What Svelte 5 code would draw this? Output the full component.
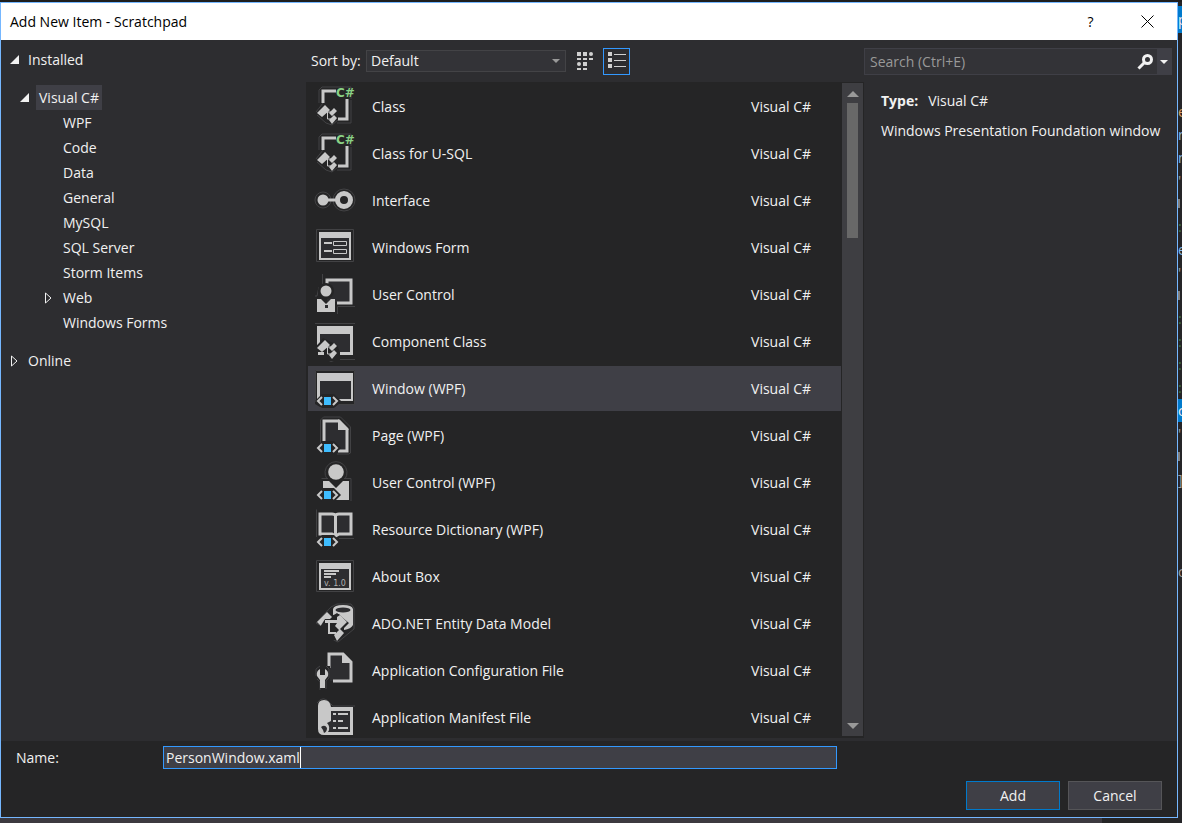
<script>
    const languages = ["WPF", "Code", "Data", "General", "MySQL", "SQL Server", "Storm Items", "Web", "Windows Forms"];

    const templates = [
        { name: "Class", icon: "class" },
        { name: "Class for U-SQL", icon: "class" },
        { name: "Interface", icon: "interface" },
        { name: "Windows Form", icon: "form" },
        { name: "User Control", icon: "control" },
        { name: "Component Class", icon: "component" },
        { name: "Window (WPF)", icon: "window" },
        { name: "Page (WPF)", icon: "page" },
        { name: "User Control (WPF)", icon: "user" },
        { name: "Resource Dictionary (WPF)", icon: "book" },
        { name: "About Box", icon: "about" },
        { name: "ADO.NET Entity Data Model", icon: "entity" },
        { name: "Application Configuration File", icon: "config" },
        { name: "Application Manifest File", icon: "manifest" }
    ];

    // slice of the editor that shows to the right of the dialog
    const editor_lines = [
        { text: "e", kind: "ident" },
        { text: "r", kind: "type" },
        { text: "n", kind: "type" },
        { text: "'" },
        { kind: "block" },
        { text: ":", kind: "comment" },
        { text: "e", kind: "type" },
        { text: "'" },
        { kind: "block" },
        { text: ":", kind: "comment" },
        { text: ":", kind: "comment" },
        { text: ":", kind: "comment" },
        { text: ":", kind: "comment" },
        { text: "c", kind: "active" },
        { text: "'" },
        { kind: "block" },
        { text: "]" },
        {},
        {},
        {},
        { text: "c" }
    ];

    let selected = $state(6);
    let file_name = $state("PersonWindow.xaml");
    let search = $state("");
    let sort = $state("Default");
</script>

{#snippet tag()}
    <path class="back" d="M0 33l7-7h12l7 7-7 7H7z" />
    <path class="line" d="M7 29l-4 4 4 4M18 29l4 4-4 4" />
    <path class="blue" d="M9 29h7v8H9z" />
{/snippet}

{#snippet nodes()}
    <path class="fill" d="M2 27l8-8 5 5-8 7zM14 27l5-5 3 3-5 5zM14 34l5-5 3 3-5 6z" />
    <path class="thin" d="M10 26h8M12.500 26v7h4" />
{/snippet}

{#snippet icon(kind)}
    <svg class="icon" viewBox="0 1 40 40" aria-hidden="true">
        {#if kind === "class"}
            <path class="halo" d="M4 17V4l3-3h29v12M1 26l7-9M22 37h14V14M2 29l9 8 6 2 6-5" />
            <path class="thick" d="M8 17V5h13M23 33h9V13" />
            {@render nodes()}
            <text class="cs" x="21" y="11">C#</text>
        {:else if kind === "interface"}
            <circle class="halo" cx="8" cy="20" r="8" />
            <circle class="halo" cx="29" cy="20" r="11" />
            <circle class="fill" cx="8" cy="20" r="5.500" />
            <path class="thick" d="M12 20h11" />
            <circle class="ring" cx="29" cy="20" r="6.500" />
        {:else if kind === "form"}
            <path class="halo" d="M1.500 2.500h37v32h-37z" />
            <path class="fill" d="M4 5h32v28H4z" />
            <path class="inner" d="M6 11h28v20H6z" />
            <path class="line" d="M9 16h8M9 24h8" />
            <path class="thin" d="M18.500 14.500h13v4h-13zM18.500 22.500h13v4h-13z" />
        {:else if kind === "control"}
            <path class="halo" d="M7.500 0v13M4 13l-2 9H0M22.500 40v-7.500H40" />
            <path class="inner" d="M12 5h24v23H12z" />
            <path class="thick" d="M12 11V6h24v23H22" />
            <circle class="back" cx="11" cy="17" r="8" />
            <circle class="fill" cx="11" cy="17" r="5.500" />
            <path class="fill" d="M2 25h4l5 5 5-5h4v13H2z" />
            <path class="inner" d="M10 31h3v3h-3z" />
        {:else if kind === "component"}
            <path class="halo" d="M0 2.500h40M0 38.500h12l4 2 6-2h18" />
            <path class="fill" d="M2 5h36v29H2z" />
            <path class="inner" d="M5 13h30v18H5z" />
            <path class="back" d="M0 26l8-9 14 7 3 7v9H0z" />
            {@render nodes()}
            <path class="fill" d="M2 5h3v16l-3 3zM3 31h6v3H3z" />
        {:else if kind === "window"}
            <path class="back" d="M0 2h40v34H24l-4 3H5l-5-3z" />
            <path class="halo" d="M.5 34V2.500h39v34H24" />
            <path class="fill" d="M2 5h36v28H2z" />
            <path class="inner" d="M5 13h31v18H5z" />
            {@render tag()}
        {:else if kind === "page"}
            <path class="halo" d="M5.500 28V5l3-3h17l10 10v26l-2 1H22" />
            <path class="inner" d="M8 5h16l9 9v22H8z" />
            <path class="thick" d="M9 29V6h15l8 8v22h-9" />
            <path class="fill" d="M23 4l11 11H23z" />
            {@render tag()}
        {:else if kind === "user"}
            <path class="halo" d="M12 17a11 11 0 1 1 18 0M6.500 16.500H13M29 16.500h7V39" />
            <circle class="fill" cx="21" cy="10" r="7.800" />
            <path class="fill" d="M8 19h6l7 7 7-7h6v19H8z" />
            {@render tag()}
        {:else if kind === "book"}
            <path class="halo" d="M1.500 28V.5M24 29.500h15" />
            <path class="inner" d="M5 5h31v22H5z" />
            <path class="thick" d="M5 5h12q3 0 3.500 2Q21 5 24 5h12v20H24l-3.500 2-3.500-2H5zM20.500 7v20" />
            {@render tag()}
        {:else if kind === "about"}
            <path class="halo" d="M1.500 4.500h37v31h-37z" />
            <path class="fill" d="M4 7h32v27H4z" />
            <path class="inner" d="M6 13h28v19H6z" />
            <path class="line" d="M9 15h15M9 18h12M9 21h7" />
            <text class="ver" x="9" y="30">v. 1.0</text>
        {:else if kind === "entity"}
            <path class="halo" d="M1 20L16 4l6-3h14l3 4v21L23 39l-9-4-2-9z" />
            <path class="fill" d="M18 6q1-4 10-4t10 4v16q-2 4-9 5V17l-5-6-6 1z" />
            <ellipse class="inner" cx="28" cy="7" rx="7.500" ry="2.500" />
            <path class="fill" d="M2 19L12 9l5 5L7 24z" />
            <path class="back" d="M10 16h10l-1-4 3-2 12 10-9 9v3l-7 6-9-4v-8l-4-2z" />
            <path class="fill" d="M10 17h12v-3l3-2 7 7-8 8-4-4 2-3H10zM19 32l6-6 4 4-7 8z" />
            <path class="line" d="M14 19v11h7" />
        {:else if kind === "config"}
            <path class="inner" d="M14 4h14l8 8v19H14z" />
            <path class="thick" d="M14 18V4h14l8 8v19H18" />
            <path class="fill" d="M27 4l10 9H27z" />
            <path class="back" d="M0 16h15v24H0z" />
            <path class="halo" d="M1 26v-7l4-3M11 16l3 3v9l-3 3v8M2 29l3 3v8" />
            <path class="fill" d="M5 19v6h5v-6q4 2 3 7l-3 4v8H5v-8l-3-4q-1-5 3-7z" />
        {:else}
            <path class="halo" d="M2 6q6-9 14 1l2 2h22" />
            <path class="fill" d="M3 9q0-6 6-6t7 7h22v28H9q-6 0-6-6z" />
            <path class="inner" d="M16 14h19v21H13q3-5-1-9l4-2z" />
            <path class="inner" d="M6 30q4-3 6 1 0 4-3 5l-1-3z" />
            <path class="line" d="M18 17h3M23 17h10M18 24h3M23 24h5M18 31h3M23 31h10" />
        {/if}
    </svg>
{/snippet}

{#snippet closed_arrow()}
    <svg class="arrow" viewBox="0 0 10 12" aria-hidden="true"><path class="closed" d="M1.500 1v10l5.500-5z" /></svg>
{/snippet}

{#snippet open_arrow()}
    <svg class="arrow" viewBox="0 0 10 12" aria-hidden="true"><path class="open" d="M9 1v9H0z" /></svg>
{/snippet}

<div class="desktop">
    <main class="dialog">
        <header class="titlebar">
            <h1>Add New Item - Scratchpad</h1>
            <button class="caption" aria-label="Help">?</button>
            <button class="caption" aria-label="Close">
                <svg class="close" viewBox="0 0 13 13"><path d="M.5 .5l12 12M12.500 .5l-12 12" /></svg>
            </button>
        </header>

        <div class="content">
            <nav class="tree">
                <button class="node">{@render open_arrow()}<span>Installed</span></button>
                <div class="group">
                    <button class="node lang">{@render open_arrow()}<span class="current">Visual C#</span></button>
                    {#each languages as language}
                        <button class="node child">
                            {#if language === "Web"}{@render closed_arrow()}{/if}
                            <span>{language}</span>
                        </button>
                    {/each}
                </div>
                <button class="node">{@render closed_arrow()}<span>Online</span></button>
            </nav>

            <section class="middle">
                <div class="toolbar">
                    <label for="sort">Sort by:</label>
                    <div class="select">
                        <select id="sort" bind:value={sort}>
                            <option>Default</option>
                            <option>Name Ascending</option>
                            <option>Name Descending</option>
                        </select>
                        <svg class="drop" viewBox="0 0 8 4" aria-hidden="true"><path d="M0 0h8L4 4z" /></svg>
                    </div>
                    <button class="view" aria-label="Small icons">
                        <svg viewBox="0 0 18 18">
                            <path d="M1 0h4v4H1zM7 0h4v4H7zM7 10h4v4H7zM1 6h4v2H1zM7 6h4v2H7zM13 6h4v2h-4zM1 16h4v2H1zM7 16h4v2H7z" />
                            <circle cx="15" cy="2" r="2" /><circle cx="3" cy="12" r="2" />
                        </svg>
                    </button>
                    <button class="view pressed" aria-label="Medium icons">
                        <svg viewBox="0 0 18 18"><path d="M0 0h4v4H0zM0 6h4v4H0zM0 12h4v4H0zM6 2h12v1H6zM6 8h12v1H6zM6 14h12v1H6z" /></svg>
                    </button>
                </div>

                <div class="list">
                    <div class="items">
                        {#each templates as template, i}
                            <button class="item" class:selected={selected === i} onclick={() => selected = i}>
                                {@render icon(template.icon)}
                                <span class="name">{template.name}</span>
                                <span>Visual C#</span>
                            </button>
                        {/each}
                    </div>
                    <div class="scrollbar">
                        <svg class="scroll-arrow" viewBox="0 0 12 6" aria-hidden="true"><path d="M0 6h12L6 0z" /></svg>
                        <div class="track"><div class="thumb"></div></div>
                        <svg class="scroll-arrow" viewBox="0 0 12 6" aria-hidden="true"><path d="M0 0h12L6 6z" /></svg>
                    </div>
                </div>
            </section>

            <aside class="details">
                <div class="search">
                    <input type="text" aria-label="Search" placeholder="Search (Ctrl+E)" bind:value={search} />
                    <button class="find" aria-label="Search">
                        <svg viewBox="0 0 16 16"><circle cx="10.500" cy="5.500" r="4" /><path d="M7.500 8.500L1.500 14.500" /></svg>
                    </button>
                    <button class="more" aria-label="Search options">
                        <svg viewBox="0 0 8 4"><path d="M0 0h8L4 4z" /></svg>
                    </button>
                </div>
                <p><b>Type:</b><span>Visual C#</span></p>
                <p>Windows Presentation Foundation window</p>
            </aside>
        </div>

        <footer>
            <div class="name-row">
                <label for="file-name">Name:</label>
                <div class="name-box">
                    <input id="file-name" type="text" bind:value={file_name} />
                    <span class="caret"></span>
                </div>
            </div>
            <div class="buttons">
                <button class="primary">Add</button>
                <button>Cancel</button>
            </div>
        </footer>
    </main>

    <div class="editor" aria-hidden="true">
        <div class="tab">p</div>
        <ul>
            {#each editor_lines as line}
                <li class={line.kind}>{line.text}</li>
            {/each}
        </ul>
    </div>
</div>

<style>
    :global(body) {
        background-color: #3c393f;
    }

    .desktop {
        display: grid;
        grid-template-columns: minmax(0, 1fr) 4px;
        min-height: 100vh;
        padding-top: 2px;
        box-sizing: border-box;
        align-items: start;
        background: linear-gradient(#1e1e1e 2px, transparent 2px), linear-gradient(to left, #252526 80px, transparent 80px);
        font-family: "Segoe UI", "Open Sans", "Noto Sans", sans-serif;
        font-size: 14px;
        line-height: 20px;
        color: #f1f1f1;
    }

    button, input, select {
        font: inherit;
        color: inherit;
        background: none;
        border: none;
        margin: 0;
        padding: 0;
        outline: none;
        box-sizing: border-box;
    }

    svg {
        display: block;
        flex: none;
    }

    .dialog {
        border: 1px solid #75b7ff;
        background-color: #2d2d30;
    }

    .titlebar {
        display: flex;
        align-items: center;
        height: 37px;
        padding: 0 1px 0 9px;
        background-color: #fff;
        color: #000;
    }
    h1 {
        flex: 1;
        margin: 0;
        font-size: 14px;
        font-weight: normal;
    }
    .caption {
        display: flex;
        align-items: center;
        justify-content: center;
        width: 57px;
        height: 36px;
    }
    .close {
        width: 13px;
        height: 13px;
        fill: none;
        stroke: #000;
    }

    .content {
        display: grid;
        grid-template-columns: 305px minmax(0, 1fr) 313px;
    }

    .tree {
        display: flex;
        flex-direction: column;
        gap: 13px;
        padding: 7px 0 0 9px;
    }
    .group {
        display: flex;
        flex-direction: column;
    }
    .node {
        display: flex;
        align-items: center;
        gap: 8px;
        height: 25px;
        text-align: left;
    }
    .lang {
        gap: 6px;
        padding-left: 10px;
    }
    .child {
        padding-left: 53px;
    }
    .child:has(.arrow) {
        padding-left: 34px;
        gap: 9px;
    }
    .current {
        height: 25px;
        line-height: 25px;
        padding: 0 3px;
        background-color: #3f3f46;
    }
    .arrow {
        width: 10px;
        height: 12px;
    }
    .arrow .open {
        fill: #f1f1f1;
    }
    .arrow .closed {
        fill: none;
        stroke: #f1f1f1;
    }

    .toolbar {
        display: flex;
        align-items: center;
        height: 42px;
        padding-left: 5px;
    }
    .toolbar label {
        width: 55px;
        white-space: nowrap;
    }
    .select {
        display: flex;
        align-items: center;
        width: 200px;
        height: 22px;
        box-sizing: border-box;
        border: 1px solid #434346;
        background-color: #333337;
        padding-right: 5px;
    }
    select {
        appearance: none;
        flex: 1;
        padding-left: 4px;
        height: 20px;
    }
    .drop {
        width: 8px;
        height: 4px;
        fill: #999;
    }
    .view {
        display: flex;
        align-items: center;
        justify-content: center;
        width: 27px;
        height: 27px;
        margin-left: 5px;
        border: 1px solid transparent;
        fill: #d0d0d0;
    }
    .view svg {
        width: 18px;
        height: 18px;
    }
    .pressed {
        border-color: #3399ff;
    }

    .list {
        display: flex;
        height: 656px;
        box-sizing: border-box;
        padding: 1px 1px 2px 2px;
        background-color: #252526;
    }
    .items {
        flex: 1;
        display: flex;
        flex-direction: column;
        gap: 2px;
        padding-top: 1px;
        min-width: 0;
        overflow: hidden;
    }
    .item {
        display: flex;
        flex: none;
        align-items: center;
        height: 45px;
        padding: 0 30px 0 7px;
        text-align: left;
    }
    .item.selected {
        background-color: #3f3f46;
    }
    .name {
        flex: 1;
        padding-left: 17px;
    }
    .icon {
        width: 40px;
        height: 40px;
        overflow: visible;
    }
    .icon .fill {
        fill: #c8c8c8;
    }
    .icon .inner {
        fill: #2d2d30;
    }
    .icon .back {
        fill: #252526;
    }
    .icon .blue {
        fill: #3fbdff;
    }
    .icon .thick, .icon .line, .icon .thin, .icon .ring, .icon .halo {
        fill: none;
        stroke: #c8c8c8;
    }
    .icon .thick {
        stroke-width: 3;
    }
    .icon .line {
        stroke-width: 2;
    }
    .icon .ring {
        stroke-width: 5;
    }
    .icon .halo {
        stroke: #424244;
    }
    .cs {
        fill: #89d185;
        font: bold 12px "DejaVu Sans", sans-serif;
    }
    .ver {
        fill: #b0b0b0;
        font: 8px "DejaVu Sans", sans-serif;
    }

    .scrollbar {
        display: flex;
        flex-direction: column;
        align-items: center;
        gap: 6px;
        width: 21px;
        padding: 8px 0 7px;
        margin-left: 1px;
        box-sizing: border-box;
        background-color: #3e3e42;
    }
    .scroll-arrow {
        width: 12px;
        height: 6px;
        fill: #999;
    }
    .track {
        flex: 1;
        width: 11px;
    }
    .thumb {
        height: 135px;
        background-color: #686868;
    }

    .details {
        padding: 8px 5px 0 0;
    }
    .search {
        display: flex;
        height: 27px;
        box-sizing: border-box;
        border: 1px solid #3f3f46;
        background-color: #333337;
        margin-bottom: 16px;
    }
    .search input {
        flex: 1;
        min-width: 0;
        padding-left: 5px;
    }
    .search input::placeholder {
        color: #999;
        opacity: 1;
    }
    .find {
        padding: 0 4px;
    }
    .find svg {
        width: 16px;
        height: 16px;
        fill: none;
        stroke: #f1f1f1;
        stroke-width: 3;
    }
    .more {
        display: flex;
        align-items: center;
        justify-content: center;
        width: 14px;
        background-color: #3f3f46;
    }
    .more svg {
        width: 8px;
        height: 4px;
        fill: #f1f1f1;
    }
    .details p {
        margin: 0 0 10px 17px;
        white-space: nowrap;
    }
    .details b {
        margin-right: 10px;
    }

    footer {
        margin-top: 3px;
        padding: 5px 15px 7px;
        background-color: #252526;
    }
    .name-row {
        display: flex;
        align-items: center;
        height: 23px;
        margin-bottom: 12px;
    }
    .name-row label {
        width: 147px;
    }
    .name-box {
        display: flex;
        flex: 1;
        height: 23px;
        margin-right: 325px;
        box-sizing: border-box;
        border: 1px solid #3399ff;
        background-color: #3f3f46;
        padding-left: 2px;
    }
    .name-box input {
        field-sizing: content;
        caret-color: transparent;
    }
    .caret {
        width: 1px;
        background-color: #fff;
    }
    .buttons {
        display: flex;
        justify-content: flex-end;
        gap: 8px;
    }
    .buttons button {
        width: 94px;
        height: 29px;
        border: 1px solid #555558;
        background-color: #3f3f46;
    }
    .buttons .primary {
        border-color: #007acc;
    }

    .editor {
        align-self: stretch;
        overflow: hidden;
        background-color: #252528;
        padding-top: 4px;
    }
    .tab {
        height: 27px;
        margin-bottom: 67px;
        line-height: 27px;
        background-color: #007acc;
    }
    ul {
        list-style: none;
        margin: 0;
        padding: 0;
        line-height: 23px;
        color: #a0a0a0;
    }
    li {
        height: 23px;
    }
    .ident {
        color: #d8a060;
    }
    .type {
        color: #80b8e8;
    }
    .comment {
        color: #3c7a48;
    }
    .block {
        background: linear-gradient(#808080, #808080) 0 50% / 2px 9px no-repeat;
    }
    .active {
        background-color: #007acc;
        color: #f1f1f1;
    }
</style>
